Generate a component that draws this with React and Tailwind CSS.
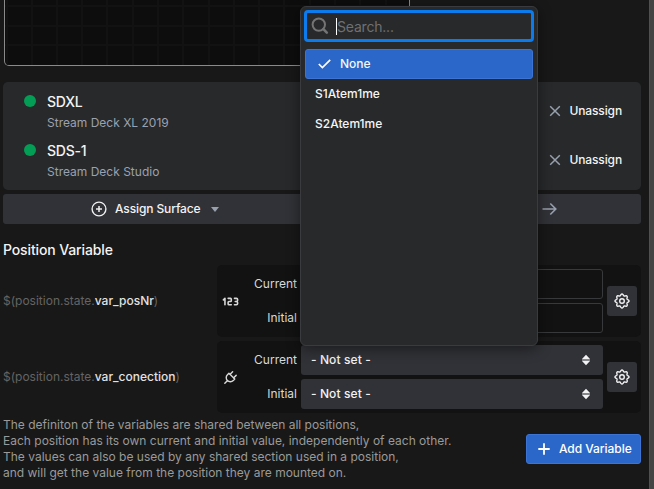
import React from "react";
import { TbPlug, TbNumber123 } from "react-icons/tb";

const GRID_X = [1, 26, 51, 76, 101, 127, 152, 177, 203, 228, 253, 278, 304, 329, 354, 380];
const GRID_Y = [5, 25, 44];

function Gear() {
  const pts = [];
  for (let i = 0; i <= 96; i++) {
    const a = (i / 96) * Math.PI * 2;
    const r = 6.2 + 0.8 * Math.cos(a * 8);
    pts.push(`${(8 + r * Math.cos(a)).toFixed(2)},${(8 + r * Math.sin(a)).toFixed(2)}`);
  }
  return (
    <svg width="16" height="16" viewBox="0 0 16 16" fill="none" stroke="#f1f1f1" strokeWidth="1.4">
      <polygon points={pts.join(" ")} strokeLinejoin="round" />
      <circle cx="8" cy="8" r="2.3" />
    </svg>
  );
}

function GearButton() {
  return (
    <button className="flex h-[30px] w-[30px] shrink-0 items-center justify-center rounded-[3px] bg-[#313237]">
      <Gear />
    </button>
  );
}

function Surface({ name, model }) {
  return (
    <div className="flex h-[49px] items-center">
      <div className="flex flex-1 pl-[21px]">
        <span className="mt-[4px] h-3 w-3 rounded-full bg-[#039d55]" />
        <div className="ml-[11px] flex flex-col">
          <span className="h-[21px] text-[14px] leading-[22px] font-medium tracking-[-0.2px] text-[#f3f3f3]">{name}</span>
          <span className="h-[20px] text-[12px] leading-[21px] text-[#9ba1b0]">{model}</span>
        </div>
      </div>
      <button className="mr-[19px] mb-[2px] flex items-center gap-2 text-[12px] font-medium tracking-[-0.12px] text-[#f3f3f3]">
        <svg width="12" height="12" viewBox="0 0 12 12" stroke="#98a0ad" strokeWidth="1.5">
          <path d="M1.2 1.2l9.6 9.6M10.8 1.2L1.2 10.8" />
        </svg>
        Unassign
      </button>
    </div>
  );
}

function SelectBox() {
  return (
    <div className="flex h-[30px] w-[302px] items-center justify-between rounded-[3px] bg-[#313237] pr-[13px] pl-[10px] text-[12px] font-medium text-[#f3f3f3]">
      <span className="tracking-[0.1px]">- Not set -</span>
      <svg width="8" height="12" viewBox="0 0 8 12">
        <path d="M4 .8L8 5H0zM4 11.2L0 7h8z" fill="#f3f3f3" />
        <path d="M0 5h8v2H0z" fill="#85868a" />
      </svg>
    </div>
  );
}

function TextBox() {
  return <div className="h-[30px] w-[302px] rounded-[3px] border border-[#38393b] bg-[#121212]" />;
}

function VariableRow({ name, icon, children }) {
  return (
    <div className="flex h-[72px] items-center">
      <div className="w-[214px] text-[12px] text-[#646464]">
        $(position.state.<span className="font-medium text-[#e2e2e2]">{name}</span>)
      </div>
      <div className="flex h-[72px] flex-1 items-center rounded-[5px] bg-[#121212] pr-1">
        <div className="flex w-[26px] justify-center text-[#d8d8d8]">{icon}</div>
        <div className="flex w-[54px] flex-col gap-1 text-right text-[12px] text-[#d8d8d8]">
          <span className="h-[30px] leading-[30px]">Current</span>
          <span className="h-[30px] leading-[30px]">Initial</span>
        </div>
        <div className="ml-1 flex flex-col gap-1">{children}</div>
        <div className="ml-1">
          <GearButton />
        </div>
      </div>
    </div>
  );
}

function Popover() {
  return (
    <div className="absolute top-[6px] left-[300px] h-[340px] w-[238px] rounded-[6px] border border-[#3a3b3e] bg-[#27292b] p-[3px] shadow-[0_3px_14px_rgba(0,0,0,0.45)]">
      <div className="flex h-8 w-[230px] items-center rounded-[4px] border-[3px] border-[#0b7bee] pl-1">
        <svg width="18" height="18" viewBox="0 0 18 18" fill="none" stroke="#747474" strokeWidth="2">
          <circle cx="7.8" cy="7.6" r="6.2" />
          <path d="M12.4 12.2l3.4 3.4" strokeWidth="2.6" strokeLinecap="round" />
        </svg>
        <span className="ml-[7px] h-[17px] w-px bg-white" />
        <span className="text-[14px] tracking-[-0.2px] text-[#6f7072]">Search...</span>
      </div>
      <div className="mt-[7px] ml-px flex w-[228px] flex-col text-[12px] font-medium text-[#f5f5f5]">
        <div className="flex h-[30px] items-center rounded-[3px] border border-[#3c74d6] bg-[#2a67c9] pl-3">
          <svg width="13" height="10" viewBox="0 0 13 10" fill="none" stroke="#fff" strokeWidth="1.6">
            <path d="M.8 5l3.6 3.6L12.2.9" />
          </svg>
          <span className="ml-[9px]">None</span>
        </div>
        <div className="h-[30px] pl-[10px] leading-[30px]">S1Atem1me</div>
        <div className="h-[30px] pl-[10px] leading-[30px]">S2Atem1me</div>
      </div>
    </div>
  );
}

export default function App() {
  return (
    <div className="relative flex h-[489px] w-[654px] overflow-hidden bg-[#181818] font-['Inter','Liberation_Sans',sans-serif]">
      <div className="flex w-[649px] flex-col pr-2 pl-[3px]">
        <div className="ml-px h-[66px] w-[406px] overflow-hidden rounded-b-[5px] border border-t-0 border-[#8a8a8a] bg-[#0d0d0d]">
          <svg width="405" height="65" fill="#121212">
            {GRID_X.map((x) => (
              <rect key={x} x={x} y="0" width="2" height="65" />
            ))}
            {GRID_Y.map((y) => (
              <rect key={y} x="0" y={y} width="405" height="2" />
            ))}
          </svg>
        </div>

        <div className="mt-4 h-[108px] rounded-[5px] bg-[#27292b] pt-[5px]">
          <Surface name="SDXL" model="Stream Deck XL 2019" />
          <Surface name="SDS-1" model="Stream Deck Studio" />
        </div>

        <div className="mt-1 flex h-[30px] items-center rounded-[3px] bg-[#313237] text-[12px] font-medium text-[#f3f3f3]">
          <svg className="ml-[88px]" width="16" height="16" viewBox="0 0 16 16" fill="none" stroke="#f0f0f0" strokeWidth="1.4">
            <circle cx="8" cy="8" r="6.9" />
            <path d="M8 5v6M5 8h6" strokeWidth="1.5" />
          </svg>
          <span className="ml-2 w-[96px] tracking-[-0.12px]">Assign Surface</span>
          <svg width="8" height="5" viewBox="0 0 8 5" fill="#98a0ad">
            <path d="M0 0h8L4 5z" />
          </svg>
          <svg className="mr-[84px] ml-auto" width="15" height="14" viewBox="0 0 15 14" fill="none" stroke="#98a0ad" strokeWidth="1.6">
            <path d="M.5 7h13M8.3 1.5L13.8 7l-5.5 5.5" />
          </svg>
        </div>

        <h2 className="mt-[15px] h-[22px] text-[14px] leading-[22px] font-medium tracking-[-0.12px] text-[#f3f3f3]">Position Variable</h2>

        <div className="mt-1 flex flex-col gap-1">
          <VariableRow name="var_posNr" icon={<TbNumber123 size={19} />}>
            <TextBox />
            <TextBox />
          </VariableRow>
          <VariableRow name="var_conection" icon={<TbPlug size={17} />}>
            <SelectBox />
            <SelectBox />
          </VariableRow>
        </div>

        <div className="mt-1 flex items-center justify-between">
          <p className="text-[12px] leading-4 whitespace-nowrap text-[#9a9a9a]">
            The definiton of the variables are shared between all positions,
            <br />
            Each position has its own current and initial value, independently of each other.
            <br />
            The values can also be used by any shared section used in a position,
            <br />
            and will get the value from the position they are mounted on.
          </p>
          <button className="flex h-[30px] w-[115px] items-center rounded-[3px] border border-[#3c74d6] bg-[#2a67c9] pl-[11px] text-[12px] font-medium text-white">
            <svg width="12" height="12" viewBox="0 0 12 12" stroke="#fff" strokeWidth="1.8">
              <path d="M6 .3v11.4M.3 6h11.4" />
            </svg>
            <span className="ml-[9px] tracking-[-0.05px]">Add Variable</span>
          </button>
        </div>
      </div>
      <div className="flex-1 border-l border-[#505050] bg-[#444444]" />
      <Popover />
    </div>
  );
}
